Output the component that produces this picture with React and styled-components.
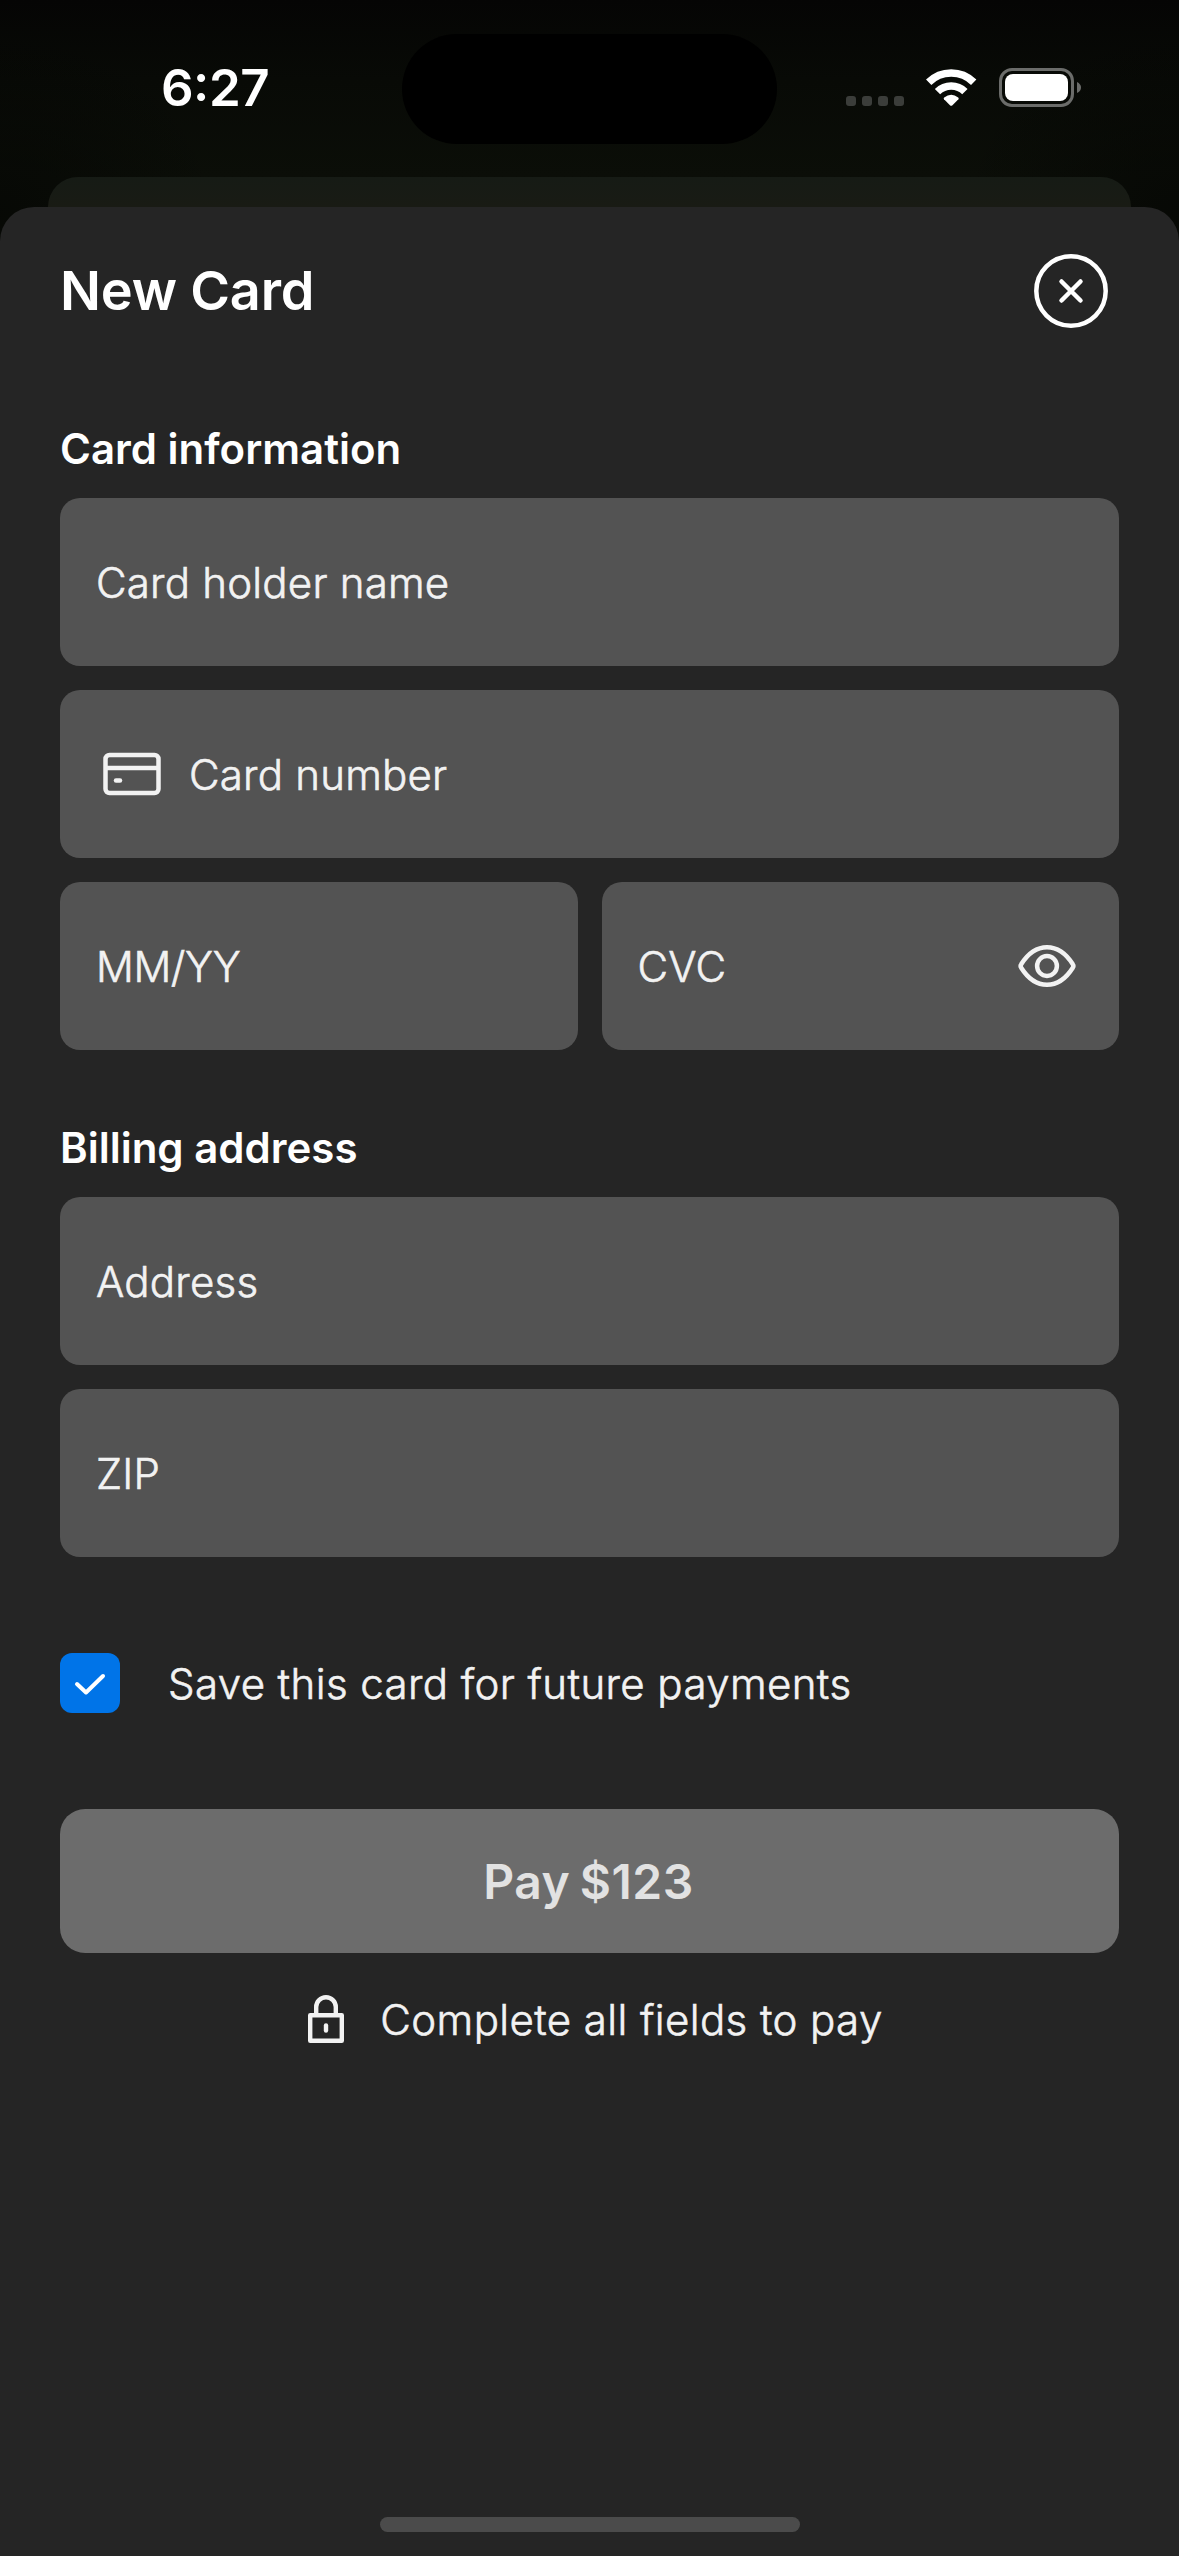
import React from "react";
import styled, { createGlobalStyle, css } from "styled-components";

const Global = createGlobalStyle`
  *, *::before, *::after { box-sizing: border-box; }
  html, body { margin: 0; background: #080a06; }
  body { font-family: Inter, "Liberation Sans", sans-serif; color: #fff; }
  svg { display: block; flex: none; }
`;

const bodyType = css`
  font-size: 42px;
  line-height: 60px;
  font-weight: 300;
  -webkit-text-stroke: 0.6px #f2f2f2;
  color: #f2f2f2;
`;

const Screen = styled.div`
  width: 1179px;
  height: 2556px;
  display: flex;
  flex-direction: column;
  overflow: hidden;
  background:
    radial-gradient(ellipse 220px 190px at 0 210px, rgba(4, 5, 3, 0.6), transparent),
    radial-gradient(ellipse 220px 190px at 1179px 210px, rgba(4, 5, 3, 0.6), transparent),
    linear-gradient(#050504 0, #080a06 80px, #0b0e08 177px, #0b0e08 240px);
`;

const StatusBar = styled.header`
  height: 177px;
  flex: none;
  display: flex;
  align-items: flex-start;
  justify-content: space-between;
  padding: 34px 98px 0 161px;
`;

const Clock = styled.time`
  width: 241px;
  font-size: 51px;
  line-height: 62px;
  font-weight: 600;
  letter-spacing: -0.5px;
  font-feature-settings: "case" 1;
  padding: 23px 0 0;
`;

const Island = styled.div`
  width: 375px;
  height: 110px;
  border-radius: 55px;
  background: #000;
`;

const StatusIcons = styled.div`
  width: 304px;
  height: 110px;
  display: flex;
  align-items: flex-start;
  justify-content: flex-end;
  padding-top: 34px;
`;

const BackSheet = styled.div`
  height: 60px;
  flex: none;
  margin: 0 48px -30px;
  border-radius: 30px 30px 0 0;
  background: linear-gradient(#161b15, #191b14 30px);
`;

const Sheet = styled.main`
  flex: 1;
  display: flex;
  flex-direction: column;
  padding: 47px 60px 24px;
  border-radius: 34px 34px 0 0;
  background: #252525;
`;

const SheetHeader = styled.div`
  height: 74px;
  display: flex;
  align-items: center;
  justify-content: space-between;
  padding-right: 11px;
`;

const Title = styled.h1`
  margin: 0;
  font-size: 54px;
  line-height: 72px;
  font-weight: 600;
  letter-spacing: -0.2px;
`;

const IconButton = styled.button`
  display: flex;
  padding: 0;
  border: 0;
  background: none;
  color: inherit;
`;

const Section = styled.section`
  display: flex;
  flex-direction: column;
  gap: 24px;
  margin-top: ${(p) => p.$top}px;
`;

const SectionTitle = styled.h2`
  margin: 0 0 -5px;
  font-size: 42px;
  line-height: 60px;
  font-weight: 600;
`;

const FieldRow = styled.div`
  display: grid;
  grid-template-columns: 1fr 1fr;
  gap: 24px;
`;

const Field = styled.label`
  height: 168px;
  display: flex;
  align-items: center;
  padding: 0 36px;
  border-radius: 20px;
  background: #535353;
`;

const Placeholder = styled.span`
  ${bodyType}
  flex: 1;
  letter-spacing: ${(p) => p.$spacing ?? 0.22}px;
  padding-top: 2px;
`;

const CardIconBox = styled.span`
  width: 93px;
  padding-left: 6px;
`;

const EyeBox = styled.span`
  margin-right: 6px;
`;

const SaveRow = styled.label`
  display: flex;
  align-items: center;
  gap: 48px;
  height: 60px;
  margin-top: 96px;
`;

const BodyText = styled.span`
  ${bodyType}
  letter-spacing: 0.4px;
  padding-top: 2px;
`;

const CheckBox = styled.span`
  width: 60px;
  height: 60px;
  display: flex;
  align-items: center;
  justify-content: center;
  border-radius: 12px;
  background: #0074e8;
`;

const PayButton = styled.button`
  height: 144px;
  flex: none;
  margin: 96px 0 0;
  padding: 2px 2px 0 0;
  border: 0;
  border-radius: 25px;
  background: #6c6c6c;
  color: #e2e2e2;
  font: 600 48px/60px Inter, "Liberation Sans", sans-serif;
  letter-spacing: 0.5px;
  word-spacing: -3px;
`;

const Hint = styled.p`
  display: flex;
  align-items: center;
  justify-content: center;
  gap: 36px;
  height: 60px;
  margin: 36px 0 0;
  padding-left: 12px;
`;

const HomeIndicator = styled.div`
  width: 420px;
  height: 15px;
  margin: auto auto 0;
  border-radius: 8px;
  background: #4b4b4b;
`;

const StatusGlyphs = () => (
  <svg width="236" height="46" viewBox="0 0 236 46">
    <g fill="#3b3d3a">
      <rect x="1" y="28" width="10" height="10" rx="3" />
      <rect x="17" y="28" width="10" height="10" rx="3" />
      <rect x="33" y="28" width="10" height="10" rx="3" />
      <rect x="49" y="28" width="10" height="10" rx="3" />
    </g>
    <g fill="none" stroke="#fff" strokeWidth="7.600">
      <path d="M83.700 14.300 A32 32 0 0 1 128.700 14.300" />
      <path d="M92.500 23.600 A19.500 19.500 0 0 1 119.900 23.600" />
    </g>
    <path d="M105.200 37.400 L99 31.200 Q98.200 30.200 99.200 29.400 Q106.200 24 113.200 29.400 Q114.200 30.200 113.400 31.200 L107.200 37.400 Q106.200 38.200 105.200 37.400 Z" fill="#fff" />
    <rect x="155.500" y="1.500" width="72" height="36" rx="11.500" fill="none" stroke="#6b6c6a" strokeWidth="3" />
    <rect x="160" y="6" width="63" height="27" rx="8" fill="#fff" />
    <path d="M232 14 Q236 16 236 19.500 Q236 23 232 25 Z" fill="#6b6c6a" />
  </svg>
);

const CloseIcon = () => (
  <svg width="74" height="74" viewBox="0 0 74 74" fill="none" stroke="#fff" strokeWidth="4.5" strokeLinecap="round">
    <circle cx="37" cy="37" r="34.700" />
    <path d="M27.500 27.500 L46.500 46.500 M46.500 27.500 L27.500 46.500" />
  </svg>
);

const CardIcon = () => (
  <svg width="60" height="46" viewBox="0 0 60 46" fill="none" stroke="#f2f2f2" strokeWidth="4.500">
    <rect x="3.500" y="4" width="53" height="38" rx="4" />
    <path d="M4 17 H56" />
    <path d="M14 29.500 H18" strokeLinecap="round" />
  </svg>
);

const EyeIcon = () => (
  <svg width="60" height="46" viewBox="0 0 60 46" fill="none" stroke="#f2f2f2" strokeWidth="4.500" strokeLinejoin="round">
    <path d="M4.200 21.200 C10 12 19 4.200 30 4.200 S50 12 55.800 21.200 Q57 23 55.800 24.800 C50 34 41 41.800 30 41.800 S10 34 4.200 24.800 Q3 23 4.200 21.200 Z" />
    <circle cx="30" cy="23" r="9.900" />
  </svg>
);

const CheckIcon = () => (
  <svg width="60" height="60" viewBox="0 0 60 60" fill="none" stroke="#fff" strokeWidth="4" strokeLinecap="round" strokeLinejoin="round">
    <path d="M17 31 L26 39.500 L43 23" />
  </svg>
);

const LockIcon = () => (
  <svg width="36" height="48" viewBox="0 0 36 48" fill="none" stroke="#f2f2f2" strokeWidth="4.400">
    <rect x="2.200" y="20.200" width="31.600" height="25.600" strokeLinejoin="round" />
    <path d="M8.200 20 V12 A9.800 9.800 0 0 1 27.800 12 V20" />
    <path d="M18 30.500 V35.500" strokeLinecap="round" />
  </svg>
);

export default function App() {
  return (
    <>
      <Global />
      <Screen>
        <StatusBar>
          <Clock>6:27</Clock>
          <Island />
          <StatusIcons>
            <StatusGlyphs />
          </StatusIcons>
        </StatusBar>
        <BackSheet />
        <Sheet>
          <SheetHeader>
            <Title>New Card</Title>
            <IconButton aria-label="Close">
              <CloseIcon />
            </IconButton>
          </SheetHeader>

          <Section $top={91}>
            <SectionTitle>Card information</SectionTitle>
            <Field>
              <Placeholder>Card holder name</Placeholder>
            </Field>
            <Field>
              <CardIconBox>
                <CardIcon />
              </CardIconBox>
              <Placeholder>Card number</Placeholder>
            </Field>
            <FieldRow>
              <Field>
                <Placeholder $spacing={-0.4}>MM/YY</Placeholder>
              </Field>
              <Field>
                <Placeholder>CVC</Placeholder>
                <EyeBox>
                  <EyeIcon />
                </EyeBox>
              </Field>
            </FieldRow>
          </Section>

          <Section $top={68}>
            <SectionTitle>Billing address</SectionTitle>
            <Field>
              <Placeholder>Address</Placeholder>
            </Field>
            <Field>
              <Placeholder>ZIP</Placeholder>
            </Field>
          </Section>

          <SaveRow>
            <CheckBox>
              <CheckIcon />
            </CheckBox>
            <BodyText>Save this card for future payments</BodyText>
          </SaveRow>

          <PayButton>Pay $123</PayButton>

          <Hint>
            <LockIcon />
            <BodyText>Complete all fields to pay</BodyText>
          </Hint>

          <HomeIndicator />
        </Sheet>
      </Screen>
    </>
  );
}
